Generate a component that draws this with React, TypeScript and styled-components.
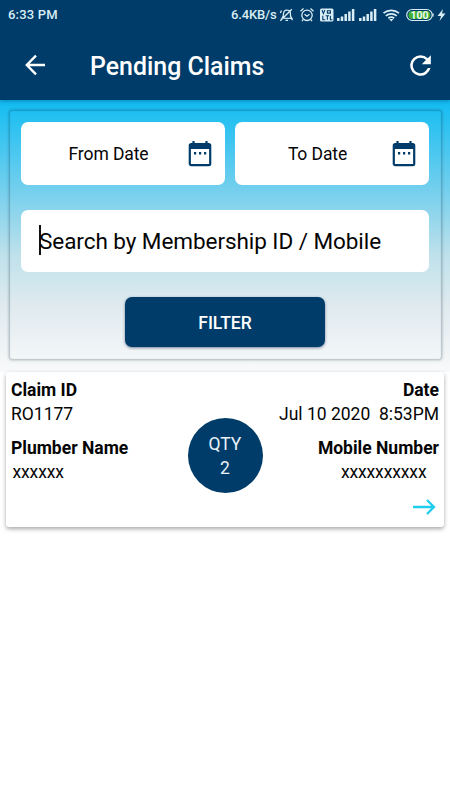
import React from "react";
import styled, { createGlobalStyle } from "styled-components";

const NAVY = "#003c69";

const GlobalStyle = createGlobalStyle`
  * { box-sizing: border-box; }
  body { margin: 0; background: #fff; font-family: Roboto, "Liberation Sans", sans-serif; color: #050505; }
  button { font-family: inherit; border: 0; padding: 0; background: none; }
`;

const Screen = styled.div`
  width: 450px;
  height: 800px;
  overflow: hidden;
  display: flex;
  flex-direction: column;
  background: #fff;
`;

const Header = styled.header`
  flex: none;
  height: 100px;
  background: ${NAVY};
  color: #fff;
  position: relative;
  box-shadow: 0 1px 4px rgba(0, 40, 80, 0.35);
`;

const StatusBar = styled.div`
  height: 30px;
  padding: 0 2px 0 8px;
  display: flex;
  align-items: center;
  justify-content: space-between;
  color: #d9edf5;
  font-size: 13px;
  font-weight: 500;
  line-height: 30px;
`;

const Clock = styled.span`
  letter-spacing: 0.2px;
`;

const StatusIcons = styled.svg`
  display: block;
`;

const Signals = styled.div`
  display: flex;
  align-items: center;
`;

const Speed = styled.span`
  width: 48px;
  white-space: nowrap;
  font-size: 13px;
  letter-spacing: -0.15px;
`;

const Toolbar = styled.div`
  height: 70px;
  padding: 0 16px 0 21px;
  display: flex;
  align-items: center;
`;

const IconButton = styled.button`
  width: 28px;
  height: 28px;
  color: #fff;
  display: flex;
  align-items: center;
  justify-content: center;
`;

const RefreshGlyph = styled.svg`
  flex: none;
`;

const Title = styled.h1`
  margin: 3px 0 0 41px;
  flex: 1;
  font-size: 24.9px;
  font-weight: 500;
  line-height: 32px;
  white-space: nowrap;
`;

const FilterArea = styled.section`
  flex: none;
  height: 272px;
  padding: 11px 9px 0 10px;
  background: linear-gradient(#10bbf1 0, #1fbff2 12px, #7dd1ed 98px, #bfe1eb 155px, #dfeaef 205px, #f3f6f7 258px, #f8f9fa 272px);
`;

const FilterPanel = styled.form`
  height: 248px;
  padding: 11px 12px 0 11px;
  border-radius: 2px;
  box-shadow: 0 0 3px 1px rgba(0, 30, 50, 0.32), inset 0 0 1px rgba(0, 30, 50, 0.2);
`;

const DateRow = styled.div`
  display: grid;
  grid-template-columns: 204px 194px;
  gap: 10px;
`;

const DateField = styled.div`
  height: 63px;
  padding: 0 13px 0 0;
  border-radius: 7px;
  background: #fff;
  display: flex;
  align-items: center;
  font-size: 17.5px;
  letter-spacing: -0.1px;
`;

const DateLabel = styled.span`
  flex: 1;
  padding-left: 8px;
  text-align: center;
`;

const SearchField = styled.div`
  margin-top: 25px;
  height: 62px;
  padding-left: 18px;
  border-radius: 7px;
  background: #fff;
  display: flex;
  align-items: center;
  font-size: 22.5px;
  letter-spacing: -0.06px;
  white-space: nowrap;
`;

const Caret = styled.span`
  width: 2px;
  height: 30px;
  margin-right: -2px;
  margin-bottom: 2px;
  background: #111;
`;

const FilterButton = styled.button`
  display: block;
  margin: 25px 0 0 104px;
  width: 200px;
  height: 50px;
  border-radius: 7px;
  background: ${NAVY};
  color: #fff;
  font-size: 17.5px;
  font-weight: 500;
  line-height: 52px;
  box-shadow: 0 1px 3px rgba(0, 20, 70, 0.5);
`;

const ClaimCard = styled.article`
  flex: none;
  height: 155px;
  margin: 0 6px;
  padding: 6px 5px 0;
  border-radius: 3px;
  background: #fff;
  box-shadow: 0 2px 4px rgba(0, 0, 0, 0.34);
  display: grid;
  grid-template-columns: 176.5px 75px 1fr;
  font-size: 17.5px;
  line-height: 24px;
`;

const Details = styled.div<{ $end?: boolean }>`
  display: flex;
  flex-direction: column;
  align-items: ${(p) => (p.$end ? "flex-end" : "flex-start")};
  white-space: pre;
`;

const Label = styled.strong<{ $second?: boolean }>`
  height: 24px;
  margin-top: ${(p) => (p.$second ? 10 : 0)}px;
  font-weight: 700;
`;

const Value = styled.span<{ $indent?: number }>`
  height: 24px;
  margin: 0 ${(p) => p.$indent ?? 0}px;
  letter-spacing: ${(p) => (p.$indent ? -0.12 : 0)}px;
`;

const Quantity = styled.div`
  width: 75px;
  height: 75px;
  margin-top: 39.5px;
  padding-top: 14.5px;
  border-radius: 50%;
  background: ${NAVY};
  color: #e9f2f8;
  text-align: center;
`;

const ArrowLink = styled.div`
  height: 24px;
  margin: 13px 3px 0 0;
`;

const CalendarIcon = () => (
  <svg width="24" height="28" viewBox="0 0 24 28">
    <path d="M5.5 1v5M18.5 1v5" stroke={NAVY} strokeWidth="2.2" />
    <rect x="1.8" y="4.2" width="20.4" height="21" rx="1.4" fill="#fff" stroke={NAVY} strokeWidth="2.2" />
    <path d="M1 4h22v5H1z" fill={NAVY} />
    <path d="M6 12h2.2v2.4H6zM11 12h2.2v2.4H11zM16 12h2.2v2.4H16z" fill={NAVY} />
  </svg>
);

const DeviceIcons = () => (
  <StatusIcons width="169" height="20" viewBox="279 5 169 20" fill="none" stroke="#d9edf5" strokeWidth="1.3">
    <path d="M282 18.2c1.5-1.4 1.5-2.8 1.6-5 .2-2.2 1.8-3.3 3.6-3 2.2.2 3.4 1.6 3.2 3.8-.2 2 .3 3.1 1.4 4.4zM285.5 20.4h2.6M291.8 9.2 280.3 20.8M280.3 13l1.2-2.5M291 18l1.5 2.2" />
    <circle cx="307" cy="15.3" r="5.2" />
    <path d="M304.5 14.2l2.5 2 2.5-2M300.5 11.2l3-2.7M313.5 11.2l-3-2.7M303.2 19.5l-1.2 1.7M310.8 19.5l1.2 1.7" />
    <rect x="320" y="8.5" width="13.5" height="13" rx="1.5" fill="#d9edf5" stroke="none" />
    <path d="M322 10l1.4 3.6 1.4-3.6M327.4 10.7h3v2.4h-3zM322.8 15.7v4h2.4M325.6 15.7h3.4M327.4 15.7v4M330.4 15.7v4h2" stroke={NAVY} strokeWidth="1.1" />
    <path d="M338.3 21v-3M342 21v-4.5M345.7 21v-7M349.4 21v-9.5M353.1 21V9M360.3 21v-3M364 21v-4.5M367.7 21v-7M371.4 21v-9.5M375.1 21V9" strokeWidth="2.5" />
    <path d="M383.5 13.2a12 12 0 0 1 15.5 0M385.8 15.9a8.5 8.5 0 0 1 10.9 0M388.3 18.3a5 5 0 0 1 5.9 0" strokeWidth="1.7" />
    <path d="M389.2 19h4.2l-2.1 2.4z" fill="#d9edf5" stroke="none" />
    <rect x="406.7" y="9.5" width="25.5" height="11" rx="5.5" strokeWidth="1.2" />
    <rect x="408.4" y="11" width="22" height="8" rx="4" fill="#3fae35" stroke="none" />
    <path d="M433 13.5v3" />
    <text x="419.5" y="19" textAnchor="middle" fill="#effaf1" stroke="none" fontFamily="Roboto" fontWeight="700" fontSize="10.5">100</text>
    <path d="M443 9l-5.5 7h3.5l-1.5 5 6-7.5h-3.5z" fill="#d9edf5" stroke="none" />
  </StatusIcons>
);

export default function App() {
  return (
    <>
      <GlobalStyle />
      <Screen>
        <Header>
          <StatusBar>
            <Clock>6:33 PM</Clock>
            <Signals>
              <Speed>6.4KB/s</Speed>
              <DeviceIcons />
            </Signals>
          </StatusBar>
          <Toolbar>
            <IconButton aria-label="Back">
              <svg width="28" height="28" viewBox="0 0 28 28" fill="none" stroke="currentColor" strokeWidth="2.4">
                <path d="M24 14H6M15 4.7 5.8 14l9.2 9.3" />
              </svg>
            </IconButton>
            <Title>Pending Claims</Title>
            <IconButton aria-label="Refresh">
              <RefreshGlyph width="31" height="31" viewBox="0 0 24 24" fill="currentColor">
                <path d="M17.65 6.35A7.96 7.96 0 0 0 12 4a8 8 0 1 0 7.73 10h-2.08A6 6 0 1 1 12 6c1.66 0 3.14.69 4.22 1.78L13 11h7V4z" />
              </RefreshGlyph>
            </IconButton>
          </Toolbar>
        </Header>
        <FilterArea>
          <FilterPanel>
            <DateRow>
              <DateField>
                <DateLabel>From Date</DateLabel>
                <CalendarIcon />
              </DateField>
              <DateField>
                <DateLabel>To Date</DateLabel>
                <CalendarIcon />
              </DateField>
            </DateRow>
            <SearchField>
              <Caret />
              Search by Membership ID / Mobile
            </SearchField>
            <FilterButton type="button">FILTER</FilterButton>
          </FilterPanel>
        </FilterArea>
        <ClaimCard>
          <Details>
            <Label>Claim ID</Label>
            <Value>RO1177</Value>
            <Label $second>Plumber Name</Label>
            <Value $indent={1.5}>xxxxxx</Value>
          </Details>
          <Quantity>
            QTY
            <br />2
          </Quantity>
          <Details $end>
            <Label>Date</Label>
            <Value>{"Jul 10 2020  8:53PM"}</Value>
            <Label $second>Mobile Number</Label>
            <Value $indent={12.5}>xxxxxxxxxx</Value>
            <ArrowLink>
              <svg width="24" height="20" viewBox="0 0 24 20" fill="none" stroke="#20cdec" strokeWidth="2.3">
                <path d="M1 10h21M15 3l7 7-7 7" />
              </svg>
            </ArrowLink>
          </Details>
        </ClaimCard>
      </Screen>
    </>
  );
}
